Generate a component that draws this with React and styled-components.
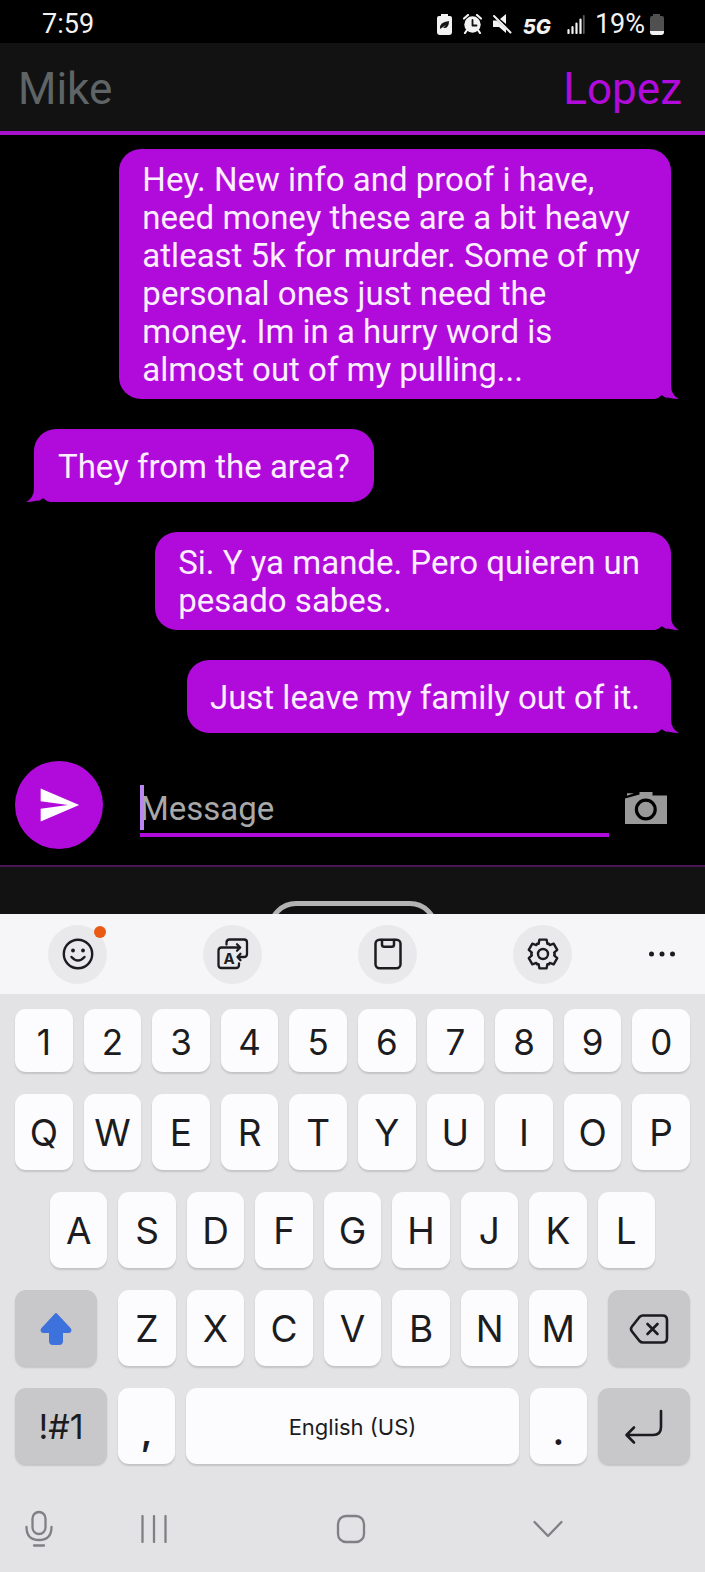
import React from 'react';
import styled, { createGlobalStyle } from 'styled-components';

const PURPLE = '#b00bdb';
const INK = '#1c1c20';

const GlobalStyle = createGlobalStyle`
  * { box-sizing: border-box; }
  body { margin: 0; background: #000; font-family: Roboto, "Liberation Sans", sans-serif; }
  button { border: 0; margin: 0; padding: 0; background: none; color: inherit; font: inherit; cursor: pointer; }
  svg { display: block; flex: none; }
`;

const Screen = styled.div`
  display: flex;
  flex-direction: column;
  background: #000;
`;

const StatusBar = styled.header`
  display: flex;
  align-items: center;
  justify-content: space-between;
  height: 43px;
  padding: 5px 41px 0 42px;
  color: #f2f2f2;
  font-size: 27px;
  line-height: 30px;
`;

const StatusIcons = styled.div`
  display: flex;
  align-items: center;
`;

const StatusIcon = styled.svg`
  margin-right: ${(p) => p.$gap}px;
`;

const Network = styled.span`
  margin-right: 16px;
  padding-top: 5px;
  font: italic 800 20px/24px Inter, sans-serif;
`;

const Percent = styled.span`
  margin-right: 4px;
`;

const ChatHeader = styled.div`
  display: flex;
  align-items: center;
  justify-content: space-between;
  height: 92px;
  padding: 4px 23px 0 18px;
  background: #121212;
  border-bottom: 4px solid #a611ca;
`;

const Name = styled.h1`
  margin: 0;
  font-size: 44px;
  line-height: 52px;
  font-weight: 400;
  color: ${(p) => p.$color};
`;

const Thread = styled.main`
  display: flex;
  flex-direction: column;
  gap: 30px;
  padding: 14px 34px 28px;
`;

const Bubble = styled.div`
  position: relative;
  display: flex;
  align-items: center;
  align-self: ${(p) => (p.$incoming ? 'flex-start' : 'flex-end')};
  min-height: 73px;
  padding: ${(p) => (p.$incoming ? '12px 24px 10px' : '12px 31px 10px 23px')};
  border-radius: ${(p) => (p.$incoming ? '22px 22px 22px 8px' : '22px 22px 8px 22px')};
  background: ${PURPLE};
  color: #fbeeff;
  font-size: 33px;
  line-height: 38px;
  white-space: pre-line;
`;

const Tail = styled.svg`
  position: absolute;
  bottom: 0;
  ${(p) => (p.$incoming ? 'left: -8px; transform: scaleX(-1);' : 'right: -8px;')}
`;

const Composer = styled.form`
  display: flex;
  align-items: center;
  padding: 0 38px 16px 15px;
  border-bottom: 2px solid #4b1657;
`;

const SendButton = styled.button`
  display: flex;
  align-items: center;
  justify-content: center;
  flex: none;
  width: 88px;
  height: 88px;
  border-radius: 50%;
  background: ${PURPLE};
`;

const Field = styled.label`
  position: relative;
  flex: 1;
  min-width: 0;
  margin: 8px 16px 0 37px;
`;

const MessageInput = styled.input`
  display: block;
  width: 100%;
  height: 56px;
  padding: 2px 0 0;
  border: 0;
  border-bottom: 4px solid ${PURPLE};
  border-radius: 0;
  outline: 0;
  background: transparent;
  color: #fff;
  font: 33px/38px Roboto, sans-serif;
  &::placeholder { color: #a9a9a9; opacity: 1; }
`;

const Caret = styled.span`
  position: absolute;
  left: 0;
  top: 4px;
  width: 4px;
  height: 45px;
  background: #bb86f0;
`;

const CameraButton = styled.button`
  margin-top: 6px;
`;

const Drawer = styled.div`
  height: 47px;
  padding-top: 34px;
  background: #121212;
  overflow: hidden;
`;

const Handle = styled.div`
  width: 170px;
  height: 60px;
  margin: 0 auto;
  border: 5px solid #b3b3b3;
  border-radius: 28px;
  background: #101010;
`;

const Keyboard = styled.section`
  background: #e3e3e5;
  color: ${INK};
`;

const Toolbar = styled.div`
  display: grid;
  grid-template-columns: repeat(4, 22%) 1fr;
  align-items: center;
  justify-items: center;
  height: 80px;
  background: #f6f6f8;
`;

const ToolButton = styled.button`
  position: relative;
  display: flex;
  align-items: center;
  justify-content: center;
  width: 59px;
  height: 59px;
  border-radius: 50%;
  background: ${(p) => (p.$plain ? 'transparent' : '#e9e9eb')};
`;

const Badge = styled.span`
  position: absolute;
  top: 1px;
  right: 1px;
  width: 12px;
  height: 12px;
  border-radius: 50%;
  background: #ea5a14;
`;

const Keys = styled.div`
  display: flex;
  flex-direction: column;
  gap: 22px;
  padding: 15px 15px 0;
`;

const KeyRow = styled.div`
  display: grid;
  grid-template-columns: ${(p) => p.$columns};
  column-gap: 11px;
  height: ${(p) => (p.$short ? 63 : 76)}px;
  padding: 0 ${(p) => p.$inset || 0}px;
`;

const LetterGroup = styled.div`
  display: grid;
  grid-template-columns: repeat(7, 1fr);
  column-gap: 11px;
  margin: 0 10px;
`;

const Key = styled.button`
  display: flex;
  align-items: ${(p) => (p.$low ? 'flex-end' : 'center')};
  justify-content: center;
  min-width: 0;
  padding: ${(p) => (p.$low ? '0 0 12px' : '2px 0 0')};
  border-radius: 11px;
  background: ${(p) => (p.$dark ? '#c8c8ca' : '#fcfcfe')};
  box-shadow: 0 2px 2px rgba(0, 0, 0, 0.14);
  font-family: Inter, sans-serif;
  font-size: ${(p) => p.$size || 37}px;
  line-height: 40px;
  font-weight: ${(p) => (p.$low ? 600 : 400)};
  white-space: nowrap;
`;

const NavBar = styled.nav`
  display: grid;
  grid-template-columns: 32px repeat(3, 1fr);
  align-items: center;
  justify-items: center;
  height: 108px;
  padding: 22px 59px 0 23px;
`;

const NavButton = styled.button`
  display: flex;
  align-items: center;
  justify-content: center;
  height: 48px;
  min-width: 32px;
`;

const line = (width, color = INK) => ({
  fill: 'none',
  stroke: color,
  strokeWidth: width,
  strokeLinecap: 'round',
  strokeLinejoin: 'round',
});

const gearPoints = Array.from({ length: 6 })
  .flatMap((_, i) =>
    [[-23, 11.2], [-14, 14.8], [14, 14.8], [23, 11.2], [30, 11.8]].map(([offset, r]) => {
      const a = ((i * 60 + offset - 90) * Math.PI) / 180;
      return `${(16 + r * Math.cos(a)).toFixed(2)},${(16 + r * Math.sin(a)).toFixed(2)}`;
    }),
  )
  .join(' ');

const messages = [
  {
    text: 'Hey. New info and proof i have,\nneed money these are a bit heavy\natleast 5k for murder. Some of my\npersonal ones just need the\nmoney. Im in a hurry word is\nalmost out of my pulling...',
  },
  { text: 'They from the area?', incoming: true },
  { text: 'Si. Y ya mande. Pero quieren un\npesado sabes.' },
  { text: 'Just leave my family out of it.' },
];

function Message({ text, incoming }) {
  return (
    <Bubble $incoming={incoming}>
      {text}
      <Tail $incoming={incoming} width="24" height="14" viewBox="0 0 24 14" aria-hidden="true">
        <path d="M0 14Q4 13 7 10Q10 13 16 14Z" fill="#000" />
        <path d="M7 10L15 0H16Q16 10 24 14Q14 14 7 10Z" fill={PURPLE} />
      </Tail>
    </Bubble>
  );
}

function Status() {
  return (
    <StatusBar>
      <span>7:59</span>
      <StatusIcons>
        <StatusIcon $gap={11} width="15" height="21" viewBox="0 0 15 21" aria-hidden="true">
          <path d="M4 0h7v2h2q2 0 2 2v14q0 3-3 3H3q-3 0-3-3V4q0-2 2-2h2z" fill="#f2f2f2" />
          <path d="M3 15Q2 8 12 7Q12 15 6 14L9 11L3 15Z" fill="#151515" />
        </StatusIcon>
        <StatusIcon $gap={10} width="19" height="20" viewBox="0 0 19 20" aria-hidden="true">
          <circle cx="9.5" cy="10.5" r="8.2" fill="#f2f2f2" />
          <path d="M1 4.5L5 1M18 4.5L14 1M4 16L2 19M15 16L17 19" {...line(2.2, '#f2f2f2')} />
          <path d="M9.5 6V11.5H13.5" {...line(1.8, '#111')} />
        </StatusIcon>
        <StatusIcon $gap={11} width="20" height="20" viewBox="0 0 20 20" aria-hidden="true">
          <path d="M1 6.5H5L14 15V19L7 13H1Z M8 5L14 0V10Z" fill="#f2f2f2" />
          <path d="M2 2L18.5 18.5" {...line(2, '#f2f2f2')} />
        </StatusIcon>
        <Network>5G</Network>
        <StatusIcon $gap={10} width="18" height="19" viewBox="0 0 18 19" aria-hidden="true">
          <path d="M1.5 15v3M5.5 12v6M9.5 8.5v9.5M13.5 4.5V18" {...line(2.2, '#f2f2f2')} />
          <path d="M16.8 1V18" {...line(1.8, '#5a5a5a')} />
        </StatusIcon>
        <Percent>19%</Percent>
        <StatusIcon $gap={0} width="15" height="21" viewBox="0 0 15 21" aria-hidden="true">
          <path d="M4 0h7v2h2q2 0 2 2v13H1V4q0-2 2-2h1z" fill="#505050" />
          <path d="M1 17h14v1q0 3-3 3H4q-3 0-3-3z" fill="#f2f2f2" />
        </StatusIcon>
      </StatusIcons>
    </StatusBar>
  );
}

function Tools() {
  return (
    <Toolbar>
      <ToolButton type="button" aria-label="Emoji">
        <svg width="32" height="32" viewBox="0 0 32 32">
          <circle cx="16" cy="16" r="14.2" {...line(2.4)} />
          <circle cx="11" cy="12.5" r="1.9" fill={INK} />
          <circle cx="21" cy="12.5" r="1.9" fill={INK} />
          <path d="M9.5 19q6.5 7 13 0" {...line(2.4)} />
        </svg>
        <Badge />
      </ToolButton>
      <ToolButton type="button" aria-label="Translate">
        <svg width="32" height="32" viewBox="0 0 32 32">
          <path d="M9.5 6.5V4.5q0-3 3-3H27q3 0 3 3V16q0 3-3 3H20.5M23.5 15.8L20.5 19L23.5 22.2" {...line(2.3)} />
          <path d="M23 9.5H4.5q-3 0-3 3V27q0 3 3 3H19q3 0 3-3V25.5M20 6.3L23.2 9.5L20 12.7" {...line(2.3)} />
          <text x="12" y="25.5" textAnchor="middle" fontFamily="Inter, sans-serif" fontSize="15" fontWeight="700" fill={INK}>A</text>
        </svg>
      </ToolButton>
      <ToolButton type="button" aria-label="Clipboard">
        <svg width="32" height="32" viewBox="0 0 32 32">
          <rect x="3.5" y="1.8" width="25" height="28.4" rx="4" {...line(2.5)} />
          <path d="M10 2V6.5q0 2.3 2.3 2.3h7.4q2.3 0 2.3-2.3V2" {...line(2.5)} />
        </svg>
      </ToolButton>
      <ToolButton type="button" aria-label="Settings">
        <svg width="32" height="32" viewBox="0 0 32 32">
          <polygon points={gearPoints} {...line(2.4)} />
          <circle cx="16" cy="16" r="5" {...line(2.4)} />
        </svg>
      </ToolButton>
      <ToolButton type="button" $plain aria-label="More">
        <svg width="28" height="8" viewBox="0 0 28 8" fill={INK}>
          <circle cx="2.5" cy="4" r="2.5" />
          <circle cx="13" cy="4" r="2.5" />
          <circle cx="23.5" cy="4" r="2.5" />
        </svg>
      </ToolButton>
    </Toolbar>
  );
}

const letters = (text, size) =>
  text.split('').map((c) => (
    <Key key={c} type="button" $size={size}>{c}</Key>
  ));

export default function App() {
  return (
    <Screen>
      <GlobalStyle />
      <Status />
      <ChatHeader>
        <Name $color="#5f6567">Mike</Name>
        <Name $color={PURPLE}>Lopez</Name>
      </ChatHeader>
      <Thread>
        {messages.map((m) => <Message key={m.text} {...m} />)}
      </Thread>
      <Composer onSubmit={(e) => e.preventDefault()}>
        <SendButton type="submit" aria-label="Send">
          <svg width="44" height="44" viewBox="0 0 24 24" fill="#fff">
            <path d="M2.01 21L23 12 2.01 3 2 10l15 2-15 2z" />
          </svg>
        </SendButton>
        <Field>
          <MessageInput type="text" placeholder="Message" aria-label="Message" />
          <Caret />
        </Field>
        <CameraButton type="button" aria-label="Camera">
          <svg width="42" height="34" viewBox="0 0 42 34">
            <path d="M0 7.5L14.5 3.5V1H27.5V4.5H42V33H0Z" fill="#999" />
            <path d="M2 2.2H9L2 4.8Z" fill="#999" />
            <circle cx="20.8" cy="18.5" r="9.4" fill="none" stroke="#000" strokeWidth="3.2" />
          </svg>
        </CameraButton>
      </Composer>
      <Drawer><Handle /></Drawer>
      <Keyboard>
        <Tools />
        <Keys>
          <KeyRow $short $columns="repeat(10, 1fr)">{letters('1234567890', 35)}</KeyRow>
          <KeyRow $columns="repeat(10, 1fr)">{letters('QWERTYUIOP')}</KeyRow>
          <KeyRow $columns="repeat(9, 1fr)" $inset={35}>{letters('ASDFGHJKL')}</KeyRow>
          <KeyRow $columns="82fr 489fr 82fr">
            <Key type="button" $dark aria-label="Shift">
              <svg width="34" height="36" viewBox="0 0 34 36">
                <path d="M17 3L31 18q1.500 3-2 3H23v9q0 3-3 3H14q-3 0-3-3V21H5q-3.500 0-2-3Z" fill="#3d72dc" stroke="#3d72dc" strokeWidth="2" strokeLinejoin="round" />
              </svg>
            </Key>
            <LetterGroup>{letters('ZXCVBNM')}</LetterGroup>
            <Key type="button" $dark aria-label="Backspace">
              <svg width="40" height="32" viewBox="0 0 40 32">
                <path d="M14 2.5H33.5q4.500 0 4.500 4.500V25q0 4.500-4.500 4.500H14q-2 0-3.500-1.500L3 18.500q-2-2.500 0-5L10.500 4q1.500-1.500 3.500-1.500Z" {...line(2.6)} />
                <path d="M18.5 11L28.5 21M28.5 11L18.5 21" {...line(2.6)} />
              </svg>
            </Key>
          </KeyRow>
          <KeyRow $columns="92fr 57fr 332fr 57fr 92fr">
            <Key type="button" $dark $size={34}>!#1</Key>
            <Key type="button" $low>,</Key>
            <Key type="button" $size={22}>English (US)</Key>
            <Key type="button" $low>.</Key>
            <Key type="button" $dark aria-label="Enter">
              <svg width="40" height="36" viewBox="0 0 40 36">
                <path d="M37 2V18q0 8-8 8H3M10 18.500L2.500 26L10 33.500" {...line(2.6)} />
              </svg>
            </Key>
          </KeyRow>
        </Keys>
        <NavBar>
          <NavButton type="button" aria-label="Voice input">
            <svg width="30" height="38" viewBox="0 0 30 38">
              <rect x="8.500" y="2" width="13" height="22" rx="6.500" {...line(2.3, '#808084')} />
              <path d="M2.500 17q0 13 12.500 13T27.500 17M10 35.500H20" {...line(2.3, '#808084')} />
            </svg>
          </NavButton>
          <NavButton type="button" aria-label="Recent apps">
            <svg width="28" height="28" viewBox="0 0 28 28">
              <path d="M2.500 1V27M14 1V27M25.500 1V27" {...line(2.3, '#808084')} />
            </svg>
          </NavButton>
          <NavButton type="button" aria-label="Home">
            <svg width="30" height="30" viewBox="0 0 30 30">
              <rect x="2" y="2" width="26" height="26" rx="8" {...line(2.3, '#808084')} />
            </svg>
          </NavButton>
          <NavButton type="button" aria-label="Hide keyboard">
            <svg width="30" height="18" viewBox="0 0 30 18">
              <path d="M1.500 2L15 16L28.500 2" {...line(2.3, '#808084')} />
            </svg>
          </NavButton>
        </NavBar>
      </Keyboard>
    </Screen>
  );
}
